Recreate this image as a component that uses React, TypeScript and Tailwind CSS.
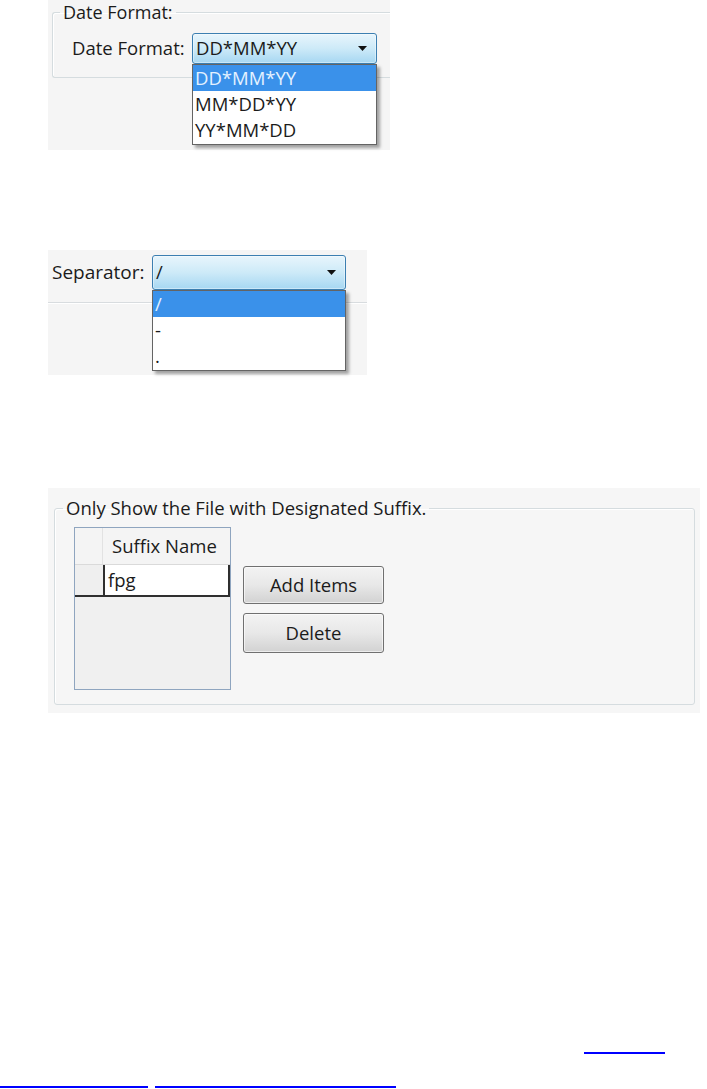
import React from "react";

function Arrow() {
  return (
    <svg width="9" height="5" viewBox="0 0 9 5" className="block">
      <polygon points="0,0 9,0 4.5,5" fill="#111" />
    </svg>
  );
}

function Combo({
  value,
  items,
  width,
  height,
}: {
  value: string;
  items: string[];
  width: number;
  height: number;
}) {
  return (
    <div className="relative shrink-0" style={{ width, height }}>
      <div className="flex h-full w-full items-center justify-between rounded-[3px] border border-[#3c7fb1] bg-gradient-to-b from-[#e8f5fc] via-[#cdeaf8] to-[#a6d7f2] pl-[3px] pr-[9px] shadow-[inset_0_0_0_1px_rgba(255,255,255,0.4)]">
        <span className="text-[18.5px] leading-none text-[#1b1b1b]">{value}</span>
        <Arrow />
      </div>
      <div className="absolute left-0 top-full w-full border border-[#646464] bg-white pb-[1px] shadow-[3px_3px_3px_rgba(0,0,0,0.35)]">
        {items.map((it, i) => (
          <div
            key={i}
            className={
              "flex h-[26px] items-center pl-[2px] text-[18.5px] leading-none " +
              (i === 0 ? "bg-[#3a91ea] text-[#e4f1ff]" : "text-[#1b1b1b]")
            }
          >
            {it}
          </div>
        ))}
      </div>
    </div>
  );
}

export default function App() {
  return (
    <div className="relative h-[1089px] w-[707px] overflow-hidden bg-white font-['Open_Sans',_'Noto_Sans',_sans-serif] text-[#1b1b1b]">
      {/* Screenshot 1 */}
      <div className="ml-[48px] h-[150px] w-[342px] bg-[#f5f5f5] pl-[4px]">
        <fieldset className="w-[338px] rounded-l-[3px] border border-r-0 border-[#d5dcdf] p-0 shadow-[inset_1px_1px_0_#ffffff]">
          <legend className="ml-[7px] px-[3px] text-[18px] leading-[24px]">Date Format:</legend>
          <div className="flex items-center pb-[13px] pl-[19px] pt-[9px]">
            <span className="w-[120px] text-[18.5px] leading-none">Date Format:</span>
            <Combo value="DD*MM*YY" items={["DD*MM*YY", "MM*DD*YY", "YY*MM*DD"]} width={185} height={31} />
          </div>
        </fieldset>
      </div>

      {/* Screenshot 2 */}
      <div className="ml-[48px] mt-[100px] h-[125px] w-[319px] bg-[#f5f5f5]">
        <div className="h-[53px] border-b border-[#d8dcdf] pl-[4px] pt-[5px]">
          <div className="flex items-center">
            <span className="w-[100px] text-[19px] leading-none">Separator:</span>
            <Combo value="/" items={["/", "-", "."]} width={194} height={35} />
          </div>
        </div>
        <div className="h-[1px] bg-white" />
      </div>

      {/* Screenshot 3 */}
      <div className="ml-[48px] mt-[113px] h-[225px] w-[652px] bg-[#f6f6f6] pl-[6px] pt-[8px]">
        <fieldset className="h-[209px] w-[641px] rounded-[3px] border border-[#d5dcdf] p-0 shadow-[inset_1px_1px_0_#ffffff]">
          <legend className="ml-[8px] px-[3px] text-[18.5px] leading-[24px]">
            Only Show the File with Designated Suffix.
          </legend>
          <div className="flex pl-[19px] pt-[7px]">
            <div className="flex h-[163px] w-[157px] flex-col border border-[#8fa5bf] bg-[#f0f0f0]">
              <div className="flex h-[37px] border-b border-[#dadada] bg-[#f4f4f4]">
                <div className="w-[28px] border-r border-[#e2e2e2]" />
                <div className="flex items-center pl-[9px] text-[18.5px] leading-none">Suffix Name</div>
              </div>
              <div className="flex h-[32px] border-b-2 border-[#2f2f2f]">
                <div className="w-[28px] bg-[#efefef]" />
                <div className="flex flex-1 items-center border-l-2 border-r-2 border-[#2f2f2f] bg-white pl-[3px] text-[18.5px] leading-none">
                  fpg
                </div>
              </div>
              <div className="flex-1" />
            </div>
            <div className="ml-[12px] mt-[39px] flex flex-col gap-[9px]">
              <button className="flex h-[38px] w-[141px] items-center justify-center rounded-[3px] border border-[#707070] bg-gradient-to-b from-[#f3f3f3] via-[#e8e8e8] to-[#d2d2d2] text-[18.5px] leading-none text-[#1b1b1b] shadow-[inset_0_0_0_1px_rgba(255,255,255,0.6)]">
                Add Items
              </button>
              <button className="flex h-[40px] w-[141px] items-center justify-center rounded-[3px] border border-[#707070] bg-gradient-to-b from-[#f3f3f3] via-[#e8e8e8] to-[#d2d2d2] text-[18.5px] leading-none text-[#1b1b1b] shadow-[inset_0_0_0_1px_rgba(255,255,255,0.6)]">
                Delete
              </button>
            </div>
          </div>
        </fieldset>
      </div>

      {/* Link underlines */}
      <div className="mt-[339px] pl-[584px]">
        <div className="h-[2px] w-[81px] bg-[#0000ff]" />
      </div>
      <div className="mt-[32px] flex gap-[7px]">
        <div className="h-[2px] w-[148px] bg-[#0000ff]" />
        <div className="h-[2px] w-[241px] bg-[#0000ff]" />
      </div>
    </div>
  );
}
